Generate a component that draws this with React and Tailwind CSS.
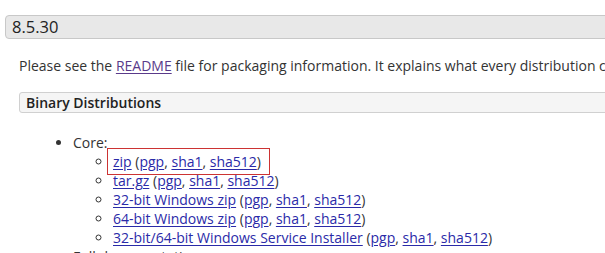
import React from "react";

const A = ({ children }) => (
  <a href="#" className="text-[#2a2aa8] underline underline-offset-[2px]">{children}</a>
);

const Sums = () => (
  <>
    {" "}(<A>pgp</A>, <A>sha1</A>, <A>sha512</A>)
  </>
);

export default function App() {
  return (
    <div className="w-[605px] h-[253px] overflow-hidden bg-white text-[#333] font-['Open_Sans',sans-serif]">
      <div className="w-[720px] pt-[15px] pl-[5px]">
        <div className="h-[24px] border border-[#c8c8c8] rounded-[4px] bg-[#e8e8e8] pl-[6px] text-[16.5px] leading-[22px] text-[#222]">
          8.5.30
        </div>
        <div className="pl-[14px]">
          <p className="mt-[17px] text-[14px] leading-[19px] whitespace-nowrap">
            Please see the <a href="#" className="text-[#5a3a8a] underline underline-offset-[2px]">README</a> file for packaging information. It explains what every distribution contains.
          </p>
          <div className="mt-[17px] h-[21px] border border-[#d0d0d0] rounded-[3px] bg-[#f5f5f5] pl-[6px] text-[14px] leading-[19px] font-semibold text-[#222]">
            Binary Distributions
          </div>
          <ul className="mt-[20px] pl-[54px] list-disc text-[14px] leading-[19px] whitespace-nowrap">
            <li>
              Core:
              <ul className="pl-[40px] list-[circle]">
                <li>
                  <span className="inline-block border border-[#cc3333] pl-[5px] pr-[8px] py-[3px] -ml-[6px] -my-[4px]">
                    <A>zip</A><Sums />
                  </span>
                </li>
                <li><A>tar.gz</A><Sums /></li>
                <li><A>32-bit Windows zip</A><Sums /></li>
                <li><A>64-bit Windows zip</A><Sums /></li>
                <li><A>32-bit/64-bit Windows Service Installer</A><Sums /></li>
              </ul>
            </li>
            <li>Full documentation:</li>
          </ul>
        </div>
      </div>
    </div>
  );
}
